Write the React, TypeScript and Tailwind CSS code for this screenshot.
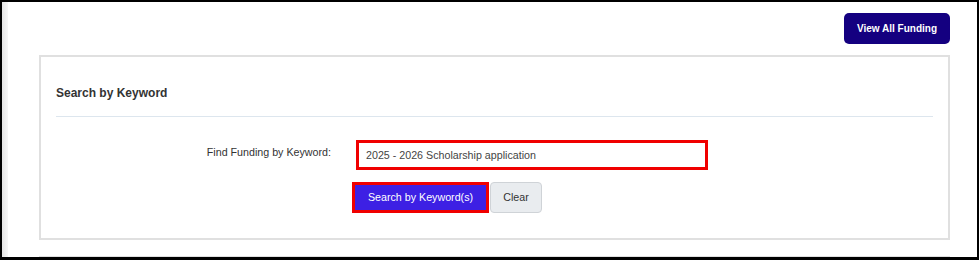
export default function App() {
  return (
    <div
      className="w-[979px] h-[260px] overflow-hidden bg-white border-black border-t-2 border-l-2 border-r-2 border-b-[3px] flex"
      style={{ fontFamily: '"Liberation Sans", Arial, sans-serif' }}
    >
      {/* left scroll shadow */}
      <div className="w-[6px] shrink-0 bg-linear-to-r from-[#e4e4e4] to-[#f6f6f6]" />

      <div className="flex-1 pl-[31px] pr-[27px] pt-[11px]">
        <div className="flex justify-end">
          <button className="w-[106px] h-[31px] rounded-[5px] bg-[#140080] text-white text-[10px] font-bold">
            View All Funding
          </button>
        </div>

        {/* Search card */}
        <section className="mt-[11px] h-[185px] border-2 border-[#e0e0e0] px-[15px] pt-[29px]">
          <h2 className="text-[12px] leading-[14px] font-bold text-[#333]">
            Search by Keyword
          </h2>
          <div className="mt-[16px] h-px bg-[#dde6ee]" />

          <div className="mt-[23px] flex items-start">
            <label className="w-[275px] mt-[6px] text-right text-[10.7px] leading-[13px] text-[#333]">
              Find Funding by Keyword:
            </label>
            <div className="ml-[25px] w-[352px] h-[30px] border-[3px] border-[#f00000] flex items-center pl-[7px] text-[10.7px] text-[#444]">
              2025 - 2026 Scholarship application
            </div>
          </div>

          <div className="mt-[12px] flex pl-[296px] gap-px">
            <button className="w-[137px] h-[31px] border-[3px] border-[#f00000] bg-[#3d20e4] text-white text-[10.7px]">
              Search by Keyword(s)
            </button>
            <button className="w-[52px] h-[31px] rounded-[4px] border border-[#cfd3d7] bg-[#e9ecef] text-[#333] text-[10.7px]">
              Clear
            </button>
          </div>
        </section>

        {/* next card (cut off) */}
        <section className="mt-[16px] h-[40px] border-2 border-[#e0e0e0]" />
      </div>
    </div>
  );
}
